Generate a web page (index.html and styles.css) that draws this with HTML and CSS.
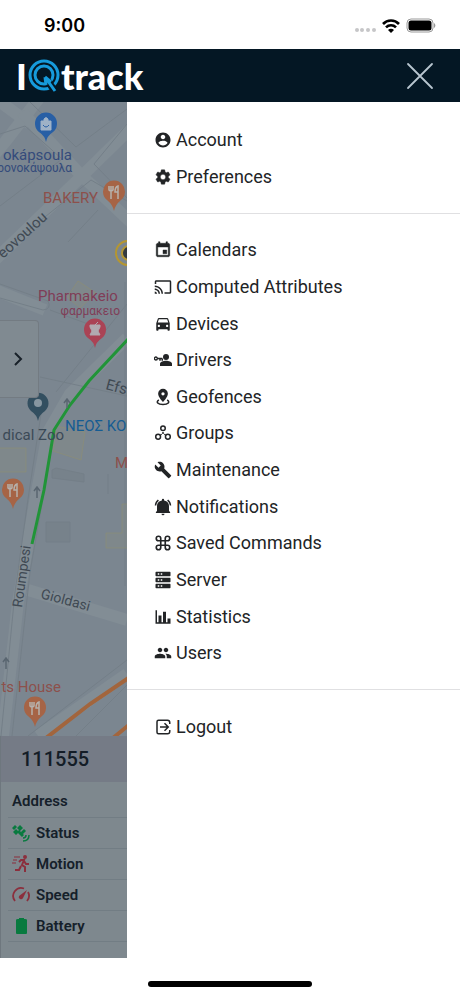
FILE: index.html
```html
<!DOCTYPE html>
<html lang="en">
<head>
  <meta charset="UTF-8" />
  <meta name="viewport" content="width=device-width, initial-scale=1.0" />
  <title>IQtrack</title>
  <link rel="stylesheet" href="styles.css">
</head>
<body>
  <div class="status-bar">
    <span class="time">9:00</span>
    <div class="status-icons">
      <svg width="22" height="6" viewBox="0 0 22 6" fill="#c6c6c8">
        <circle cx="3" cy="3" r="2" /><circle cx="8" cy="3" r="2" /><circle cx="14" cy="3" r="2" /><circle cx="20" cy="3" r="2" />
      </svg>
      <svg width="18" height="14" viewBox="0 0 18 14">
        <path d="M1 5a11 11 0 0 1 16 0M4 8.400a7 7 0 0 1 10 0" fill="none" stroke="#000" stroke-width="2.600" />
        <path d="M9 14 6 11a4 4 0 0 1 6 0z" />
      </svg>
      <svg width="30" height="15" viewBox="0 0 30 15">
        <rect x="1" y="1" width="26" height="13" rx="4" fill="none" stroke="#999" />
        <rect x="2.500" y="2.500" width="23" height="10" rx="2.500" />
        <path d="M28 5v5a3 3 0 0 0 0-5z" fill="#999" />
      </svg>
    </div>
  </div>

  <header class="header">
    <a href="#" class="logo" aria-label="IQtrack">
      <span>I</span>
      <svg width="32" height="34" viewBox="0 0 32 34" fill="none" stroke="#169bdc">
        <circle cx="16" cy="16" r="14" stroke-width="3" />
        <circle cx="16" cy="16" r="9" stroke-width="3" />
        <path d="M17 18l9 13" stroke="#041724" stroke-width="7" />
        <path d="M17 18l1 8M17 18l10 14M17 18l6 5" stroke-width="3" />
      </svg>
      <span>track</span>
    </a>
    <button class="close" aria-label="Close menu">
      <svg width="28" height="28" viewBox="0 0 28 28"><path d="M2 2l24 24M26 2 2 26" stroke="#b9c6d0" stroke-width="1.800" stroke-linecap="round" /></svg>
    </button>
  </header>

  <main class="main">
    <div class="page">
      <div class="map">
        <svg class="map-canvas" viewBox="0 0 127 634" preserveAspectRatio="xMinYMin slice">
          <!-- roads -->
          <g fill="none" stroke="#828d95" stroke-width="12">
            <path d="M-5 -4 30 22 M40 -5 5 40-10 58" />
            <path d="M22 10 80 72 135 124 M135 22 84 72 -5 158" />
            <path d="M-5 188 45 208M127 236 70 292 48 330 35 400 18 500 3 634" />
            <path d="M28 488 127 518M38 634 127 572" />
          </g>
          <g fill="none" stroke="#747f88" stroke-width="1">
            <path d="M0 32 25 24 62 57 0 104M30 0 76 45 127 7M127 22 94 62 127 96M127 99 91 78 0 151M68 140 98 108" />
            <path d="M0 182 48 199Q52 207 43 208L0 196M50 208 88 222M56 290 127 202M40 275 127 294M0 292 36 292" />
            <path d="M41 312 29 390 15 490 1 634M52 345 30 470 12 634M125 180V484M127 558 28 634M127 583 76 634" />
          </g>
          <path d="M52 368 56 366 84 372V380L52 376zM108 372v20M46 420h24v20H46z" fill="#77828b" stroke="#747f88" />
          <g fill="#868b84" stroke="#918f6c" fill-opacity=".4" stroke-opacity=".5">
            <path d="M78 179 96 191 80 206 67 195zM56 324 85 330 81 358 53 349zM-4 346h30v24H-4zM122 402h8v44h-24v-15h16z" />
          </g>
          <path d="M46 636 90 602 130 575M113 636 130 622" fill="none" stroke="#a2653d" stroke-width="4" />
          <path d="M130 235 89 279 70 303 54 328 44 388 32 442" fill="none" stroke="#219438" stroke-width="3" />
          <g fill="none" stroke="#596570" stroke-width="1.500">
            <path d="M67 306v-8m-3 3 3-4 3 4M37 396v-11m-3 4 3-4 3 4M6 567v-11m-3 4 3-4 3 4" />
          </g>
          <circle cx="128" cy="151" r="12" fill="none" stroke="#b49632" stroke-width="2" />
          <circle cx="129" cy="151" r="7" fill="#343a3f" stroke="#b49632" stroke-width="2" />

          <!-- pins -->
          <path d="M46 40Q45 34 39 30A11 11 0 1 1 53 30Q47 34 46 40z" fill="#285fa5" />
          <path d="M41 19h10v9H41zM44 19v-2q2-3 4 0v2" fill="#9fb2c7" stroke="#9fb2c7" />
          <path d="M43 23q3 4 6 0" fill="none" stroke="#285fa5" />
          <g fill="#a66446">
            <path d="M114 109Q113 103 107 98A11 11 0 1 1 121 98Q115 103 114 109z" />
            <path d="M13 407Q12 401 6 396A11 11 0 1 1 20 396Q14 401 13 407z" />
            <path d="M35 625Q34 619 28 614A11 11 0 1 1 42 614Q36 619 35 625z" />
          </g>
          <g fill="none" stroke="#b6b1ac" stroke-width="1.500">
            <path id="fork" d="M109 84v4q2 2 4 0v-4M111 84v13M118 97V84q-3 1-3 6h3" />
            <use href="#fork" x="-101" y="298" />
            <use href="#fork" x="-79" y="516" />
          </g>
          <path d="M95 246Q94 240 88 236A11 11 0 1 1 102 236Q96 240 95 246z" fill="#aa4355" />
          <path d="M90 223h10v2l-2 4 2 4H90l2-4-2-4zM95 223l3-3" fill="#b1aab0" stroke="#b1aab0" />
          <path d="M38 319Q37 313 31 309A10.500 10.500 0 1 1 45 309Q39 313 38 319z" fill="#334f60" />
          <circle cx="38" cy="301" r="4" fill="#8796a0" />

          <!-- labels -->
          <g class="label">
            <text class="shop" x="72" y="58" text-anchor="end" font-size="15">okápsoula</text>
            <text class="shop" x="72" y="70" text-anchor="end" font-size="12">ρονοκάψουλα</text>
            <text class="food" x="43" y="101" font-size="15">BAKERY</text>
            <text class="street" transform="translate(3 157) rotate(-42)" font-size="15">eovoulou</text>
            <text class="pharmacy" x="38" y="199" font-size="15">Pharmakeio</text>
            <text class="pharmacy" x="120" y="213" text-anchor="end" font-size="12">φαρμακειο</text>
            <text class="street" transform="translate(105 287) rotate(15)" font-size="15">Efst</text>
            <text class="place" x="64" y="338" text-anchor="end" font-size="15">dical Zoo</text>
            <text class="area" x="65" y="329" font-size="15">ΝΕΟΣ ΚΟ</text>
            <text class="food" x="115" y="366" font-size="15">M</text>
            <text class="street" transform="translate(22 506) rotate(-82)" font-size="14">Roumpesi</text>
            <text class="street" transform="translate(40 496) rotate(15)" font-size="14">Gioldasi</text>
            <text class="food" x="61" y="590" text-anchor="end" font-size="15">ts House</text>
          </g>
        </svg>
        <button class="expand" aria-label="Show device list">
          <svg width="12" height="14" viewBox="0 0 12 14"><path d="M3 1l6 6-6 6" fill="none" stroke="#182129" stroke-width="2" /></svg>
        </button>
      </div>

      <section class="device">
        <h2>111555</h2>
        <table>
          <tr class="address"><th scope="row">Address</th></tr>
          <tr>
            <th scope="row">
              <div class="attribute">
                <svg width="18" height="18" viewBox="0 0 18 18" fill="#087a3f">
                  <path d="M5 4l3-3 3 3-3 3zM1 8l3-3 3 3-3 3zM7 6l5 5-2 2-5-5zM9 8l3-3 2 2-3 3zM0 4l3-3 2 2-3 3z" />
                  <path d="M11 14q3 0 3-3M11 17q6 0 6-6" fill="none" stroke="#087a3f" stroke-width="1.500" />
                </svg>
                Status
              </div>
            </th>
          </tr>
          <tr>
            <th scope="row">
              <div class="attribute">
                <svg width="18" height="18" viewBox="0 0 18 18" fill="none" stroke="#8b2f3d" stroke-width="2">
                  <circle cx="13" cy="2" r="1" />
                  <path d="M7 7l2-2h3l-2 5 3 2v5M9 11l-2 4H3M12 6l2 3h3" />
                  <path d="M2 2h6M1 5h4M0 8h4" stroke-width="1" />
                </svg>
                Motion
              </div>
            </th>
          </tr>
          <tr>
            <th scope="row">
              <div class="attribute">
                <svg width="18" height="18" viewBox="0 0 18 18" fill="none" stroke="#8b2f3d" stroke-width="1.800">
                  <path d="M3 15A8 8 0 0 1 12 2.500M16 6a8 8 0 0 1-1 9" />
                  <path d="M15 4 11 12a2 2 0 0 1-4-2z" fill="#8b2f3d" stroke="none" />
                </svg>
                Speed
              </div>
            </th>
          </tr>
          <tr>
            <th scope="row">
              <div class="attribute">
                <svg width="18" height="18" viewBox="0 0 18 18" fill="#087a3f">
                  <path d="M7 2V1h5v1h1q2 0 2 1v13q0 1-1 1H5q-1 0-1-1V3q0-1 2-1z" />
                </svg>
                Battery
              </div>
            </th>
          </tr>
        </table>
      </section>
    </div>

    <nav class="drawer">
      <ul class="menu">
        <li><a href="#"><svg viewBox="0 0 24 24"><path d="M12 2C6.480 2 2 6.480 2 12s4.480 10 10 10 10-4.480 10-10S17.520 2 12 2zm0 3c1.660 0 3 1.340 3 3s-1.340 3-3 3-3-1.340-3-3 1.340-3 3-3zm0 14.200c-2.500 0-4.710-1.280-6-3.220.03-1.990 4-3.080 6-3.080 1.990 0 5.970 1.090 6 3.080-1.290 1.940-3.500 3.220-6 3.220z" /></svg>Account</a></li>
        <li><a href="#"><svg viewBox="0 0 24 24"><path d="M19.140 12.940c.04-.3.06-.61.06-.94 0-.32-.02-.64-.07-.94l2.030-1.580c.18-.14.23-.41.12-.61l-1.920-3.320c-.12-.22-.37-.29-.59-.22l-2.390.96c-.5-.38-1.030-.7-1.620-.94l-.36-2.540c-.04-.24-.24-.41-.48-.41h-3.840c-.24 0-.43.17-.47.41l-.36 2.540c-.59.24-1.130.57-1.620.94l-2.390-.96c-.22-.08-.47 0-.59.22L2.740 8.870c-.12.21-.08.47.12.61l2.030 1.580c-.05.3-.09.63-.09.94s.02.64.07.94l-2.030 1.580c-.18.14-.23.41-.12.61l1.920 3.320c.12.22.37.29.59.22l2.390-.96c.5.38 1.030.7 1.620.94l.36 2.540c.05.24.24.41.48.41h3.840c.24 0 .44-.17.47-.41l.36-2.540c.59-.24 1.130-.56 1.620-.94l2.390.96c.22.08.47 0 .59-.22l1.920-3.320c.12-.22.07-.47-.12-.61l-2.010-1.580zM12 15.600c-1.980 0-3.600-1.620-3.600-3.600s1.620-3.600 3.600-3.600 3.600 1.620 3.600 3.600-1.620 3.600-3.600 3.600z" stroke="currentColor" stroke-width=".6" /></svg>Preferences</a></li>
        <li><hr></li>
        <li><a href="#"><svg viewBox="0 0 24 24"><path d="M17 12h-5v5h5v-5zM16 1v2H8V1H6v2H5c-1.110 0-1.990.9-1.990 2L3 19c0 1.100.89 2 2 2h14c1.100 0 2-.9 2-2V5c0-1.100-.9-2-2-2h-1V1h-2zm3 18H5V8h14v11z" stroke="currentColor" stroke-width=".6" /></svg>Calendars</a></li>
        <li><a href="#"><svg viewBox="0 0 24 24"><path d="M21 3H3c-1.100 0-2 .9-2 2v3h2V5h18v14h-7v2h7c1.100 0 2-.9 2-2V5c0-1.100-.9-2-2-2zM1 18v3h3c0-1.660-1.340-3-3-3zm0-4v2c2.760 0 5 2.240 5 5h2c0-3.870-3.130-7-7-7zm0-4v2c4.970 0 9 4.030 9 9h2c0-6.080-4.930-11-11-11z" /></svg>Computed Attributes</a></li>
        <li><a href="#"><svg viewBox="0 0 24 24"><path d="M18.920 5.010C18.720 4.420 18.160 4 17.500 4h-11c-.66 0-1.210.42-1.420 1.010L3 11v9c0 .55.45 1 1 1h1c.55 0 1-.45 1-1v-1h12v1c0 .55.45 1 1 1h1c.55 0 1-.45 1-1v-9l-2.080-5.990zM6.500 16c-.83 0-1.500-.67-1.500-1.500S5.670 13 6.500 13s1.500.67 1.500 1.500S7.330 16 6.500 16zm11 0c-.83 0-1.500-.67-1.500-1.500s.67-1.500 1.500-1.500 1.500.67 1.500 1.500-.67 1.500-1.500 1.500zM5 10l1.500-4.500h11L19 10H5z" /></svg>Devices</a></li>
        <li><a href="#"><svg viewBox="0 0 24 24"><circle cx="16" cy="8" r="4" /><path d="M8 20v-3c0-2.500 4.500-4 8-4s8 1.500 8 4v3z" /><path d="M5 10h6M8 10v3M11 10v3" fill="none" stroke="currentColor" stroke-width="2" /><circle cx="2.500" cy="10" r="2" fill="none" stroke="currentColor" stroke-width="1.800" /></svg>Drivers</a></li>
        <li><a href="#"><svg viewBox="0 0 24 24"><path fill-rule="evenodd" d="M12 1a6.500 6.500 0 0 0-6.500 6.500C5.500 12 12 18.500 12 18.500S18.500 12 18.500 7.500A6.500 6.500 0 0 0 12 1zm0 4.500a2.200 2.200 0 1 1 0 4.400 2.200 2.200 0 0 1 0-4.400z" /><path d="M6.500 16C2 18.500 5 22 12 22s10-3.500 5.500-6" fill="none" stroke="currentColor" stroke-width="2" /></svg>Geofences</a></li>
        <li><a href="#"><svg viewBox="0 0 24 24"><g fill="none" stroke="currentColor" stroke-width="2"><circle cx="12" cy="5.500" r="3" /><circle cx="5.500" cy="17" r="3.200" /><circle cx="18.500" cy="17" r="3.200" /></g><circle cx="12" cy="12" r="1.300" /><circle cx="9.500" cy="14" r="1" /><circle cx="14.500" cy="14" r="1" /></svg>Groups</a></li>
        <li><a href="#"><svg viewBox="0 0 24 24"><path d="M22.700 19l-9.100-9.100c.9-2.300.4-5-1.500-6.900-2-2-5-2.400-7.400-1.300L9 6 6 9 1.600 4.700C.4 7.100.9 10.100 2.900 12.100c1.900 1.900 4.600 2.400 6.900 1.500l9.100 9.100c.4.4 1 .4 1.400 0l2.300-2.300c.5-.4.5-1.100.1-1.400z" /></svg>Maintenance</a></li>
        <li><a href="#"><svg viewBox="0 0 24 24"><path d="M6.580 3.580L5.150 2.150C2.760 3.970 1.180 6.800 1.030 10h2c.15-2.650 1.510-4.970 3.550-6.420zM20.970 10h2c-.15-3.200-1.730-6.030-4.130-7.850l-1.420 1.430c2.030 1.450 3.400 3.770 3.550 6.420zM20 10.500c0-3.500-2-6.500-6.500-7.200V2.500a1.500 1.500 0 0 0-3 0v.8C6 4 4 7 4 10.500V17l-1.500 2v1h19v-1L20 17zM12 23a2 2 0 0 0 2-2h-4a2 2 0 0 0 2 2z" /></svg>Notifications</a></li>
        <li><a href="#"><svg viewBox="0 0 24 24"><path d="M9 9V6a3 3 0 1 0-3 3h12a3 3 0 1 0-3-3v12a3 3 0 1 0 3-3H6a3 3 0 1 0 3 3z" fill="none" stroke="currentColor" stroke-width="2.200" /></svg>Saved Commands</a></li>
        <li><a href="#"><svg viewBox="0 0 24 24"><path fill-rule="evenodd" d="M3 1h18q1 0 1 1v4q0 1-1 1H3q-1 0-1-1V2q0-1 1-1zM5 3v2h2V3zm4 0v2h2V3zM3 9h18q1 0 1 1v4q0 1-1 1H3q-1 0-1-1v-4q0-1 1-1zm2 2v2h2v-2zm4 0v2h2v-2zM3 17h18q1 0 1 1v4q0 1-1 1H3q-1 0-1-1v-4q0-1 1-1zm2 2v2h2v-2zm4 0v2h2v-2z" /></svg>Server</a></li>
        <li><a href="#"><svg viewBox="0 0 24 24"><path d="M2 3h2v16h2v-9h4v9h2V5h4v14h2v-5h4v7H2z" /></svg>Statistics</a></li>
        <li><a href="#"><svg viewBox="0 0 24 24"><path d="M16 11c1.660 0 2.990-1.340 2.990-3S17.660 5 16 5c-1.660 0-3 1.340-3 3s1.340 3 3 3zm-8 0c1.660 0 2.990-1.340 2.990-3S9.660 5 8 5C6.340 5 5 6.340 5 8s1.340 3 3 3zm0 2c-2.330 0-7 1.170-7 3.500V19h14v-2.500c0-2.330-4.670-3.500-7-3.500zm8 0c-.29 0-.62.02-.97.05 1.160.84 1.970 1.970 1.970 3.450V19h6v-2.500c0-2.330-4.670-3.500-7-3.500z" /></svg>Users</a></li>
        <li><hr></li>
        <li><a href="#"><svg viewBox="0 0 24 24"><path d="M4 8V5q0-2 2-2h12q3 0 3 3v2M4 8v11q0 2 2 2h12q3 0 3-3v-2M8 12h11M14 7l5 5-5 5" fill="none" stroke="currentColor" stroke-width="2" /></svg>Logout</a></li>
      </ul>
    </nav>
  </main>

  <footer class="home-area"><div class="home-bar"></div></footer>
</body>
</html>
```
FILE: styles.css
```css
* {
  box-sizing: border-box;
}

body {
  margin: 0;
  min-height: 100vh;
  display: flex;
  flex-direction: column;
  font-family: Roboto, "Noto Sans", sans-serif;
  color: #222426;
  background: #fff;
}

svg {
  display: block;
}

button {
  padding: 0;
  border: 0;
  background: none;
  cursor: pointer;
}

/* status bar */
.status-bar {
  height: 49px;
  padding: 2px 24px 0 44px;
  display: flex;
  align-items: center;
  justify-content: space-between;
}

.time {
  font: 600 18px/24px Inter, sans-serif;
  color: #000;
}

.status-icons {
  display: flex;
  align-items: center;
  gap: 6px;
}

.status-icons svg:first-child {
  margin-top: 8px;
}

/* header */
.header {
  height: 53px;
  padding: 0 26px 0 16px;
  display: flex;
  align-items: center;
  justify-content: space-between;
  background: #041724;
}

.logo {
  display: flex;
  align-items: center;
  gap: 1px;
  font: 900 36px/40px Lato, sans-serif;
  color: #fff;
  text-decoration: none;
}

/* page behind the drawer */
.main {
  flex: 1;
  display: flex;
}

.page {
  flex: 1;
  min-width: 0;
  display: flex;
  flex-direction: column;
  overflow: hidden;
  background: #7e888e;
}

.map {
  flex: 1;
  position: relative;
  overflow: hidden;
  background: #7b8690;
}

.map-canvas {
  position: absolute;
  width: 100%;
  height: 100%;
}

.label {
  font-family: Roboto, "Noto Sans", sans-serif;
}

.shop {
  fill: #344b7b;
}

.food {
  fill: #8d504b;
}

.street {
  fill: #3f4953;
}

.pharmacy {
  fill: #803d57;
}

.place {
  fill: #3b4a57;
}

.area {
  fill: #155c93;
}

.expand {
  position: absolute;
  top: 218px;
  left: 0;
  width: 39px;
  height: 78px;
  padding-left: 12px;
  border: 1px solid #737b82;
  border-left: 0;
  border-radius: 0 4px 4px 0;
  background: #808a91;
}

/* device card */
.device {
  padding-bottom: 16px;
  border-left: 1px solid #6e777e;
  white-space: nowrap;
}

.device h2 {
  margin: 0;
  padding: 0 20px;
  font-size: 20px;
  font-weight: 500;
  line-height: 46px;
  color: #141d27;
  background: #757b86;
}

.device table {
  width: calc(100% - 7px);
  margin-left: 7px;
  border-collapse: collapse;
}

.device th {
  height: 31px;
  padding: 0 4px;
  border-bottom: 1px solid #727d84;
  font-size: 15px;
  font-weight: 600;
  line-height: 20px;
  text-align: left;
  color: #15202a;
}

.device .address th {
  height: 36px;
  padding-top: 4px;
}

.attribute {
  display: flex;
  align-items: center;
  gap: 6px;
}

/* drawer */
.drawer {
  width: 333px;
  padding: 20px 0 213px;
  display: flex;
  background: #fff;
}

.menu {
  flex: 1;
  margin: 0;
  padding: 0;
  display: flex;
  flex-direction: column;
  list-style: none;
}

.menu li {
  flex: 1;
  display: flex;
  align-items: center;
}

.menu a {
  flex: 1;
  padding: 0 27px;
  display: flex;
  align-items: center;
  gap: 4px;
  font-size: 18px;
  line-height: 24px;
  color: inherit;
  text-decoration: none;
}

.menu svg {
  width: 18px;
  height: 18px;
  fill: currentColor;
}

.menu hr {
  flex: 1;
  margin: 0;
  border: 0;
  border-top: 1px solid #e0e0e2;
}

.home-area {
  height: 38px;
  padding-top: 23px;
}

.home-bar {
  width: 164px;
  height: 6px;
  margin: 0 auto;
  border-radius: 3px;
  background: #000;
}
```
